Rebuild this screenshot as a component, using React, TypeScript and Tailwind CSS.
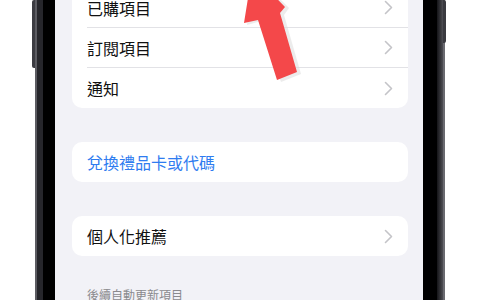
import React from "react";

const font = { fontFamily: '"Noto Sans CJK TC", "Noto Sans", sans-serif' };

function Chevron() {
  return (
    <svg width="9" height="15" viewBox="0 0 9 15" className="shrink-0">
      <path d="M1.5 1.5 L7.5 7.5 L1.5 13.5" fill="none" stroke="#c4c4c8" strokeWidth="1.6" strokeLinecap="round" strokeLinejoin="round" />
    </svg>
  );
}

function Row({ label, divider, chevron = true, blue = false }: { label: string; divider?: boolean; chevron?: boolean; blue?: boolean }) {
  return (
    <div className="flex h-[40px] items-center pl-[15px]">
      <div className={`flex h-full flex-1 items-center pr-[15px] ${divider ? "border-b border-[#e2e2e6]" : ""}`}>
        <span className={`flex-1 text-[16px] leading-none ${blue ? "text-[#2f7cf0]" : "text-[#111]"}`}>{label}</span>
        {chevron && <Chevron />}
      </div>
    </div>
  );
}

export default function App() {
  return (
    <div className="relative h-[300px] w-[480px] overflow-hidden bg-white" style={font}>
      <div className="flex h-full">
        <div className="w-[32px] shrink-0" />
        <div className="flex w-[3px] shrink-0 flex-col">
          <div className="h-[68px] rounded-l-[2px] bg-[#3c3c42]" />
        </div>
        <div className="flex h-full w-[410px] shrink-0">
          <div className="w-[2px] bg-[#5c5c62]" />
          <div className="w-[6px] bg-[#26262b]" />
          <div className="w-[12px] bg-black" />
          <div className="flex h-full w-[368px] flex-col bg-[#f2f2f7] pl-[17px] pr-[15px]">
            <div className="mt-[-12px] rounded-[10px] bg-white">
              <Row label="已購項目" divider />
              <Row label="訂閱項目" divider />
              <Row label="通知" />
            </div>
            <div className="mt-[34px] rounded-[10px] bg-white">
              <Row label="兌換禮品卡或代碼" chevron={false} blue />
            </div>
            <div className="mt-[34px] rounded-[10px] bg-white">
              <Row label="個人化推薦" />
            </div>
            <div className="mt-[33px] pl-[15px] text-[12px] leading-none text-[#8a8a8e]">後續自動更新項目</div>
          </div>
          <div className="w-[14px] bg-black" />
          <div className="w-[6px] bg-gradient-to-r from-[#151518] to-[#505056]" />
          <div className="w-[2px] bg-[#6a6a70]" />
        </div>
      </div>
      <div className="absolute left-[443px] top-0 h-[43px] w-[3px] rounded-r-[2px] bg-[#3a3a40]" />
      <svg className="pointer-events-none absolute left-0 top-0" width="480" height="300" viewBox="0 0 480 300">
        <polygon points="279,81 299,73 282,14 287,7 254,-26 245,24 259,20" fill="#d9d9d9" opacity="0.5" transform="translate(2,1)" />
        <polygon points="277,80 297,72 280,13 285,7 252,-27 244,23 258,20" fill="#f4484a" />
      </svg>
    </div>
  );
}
